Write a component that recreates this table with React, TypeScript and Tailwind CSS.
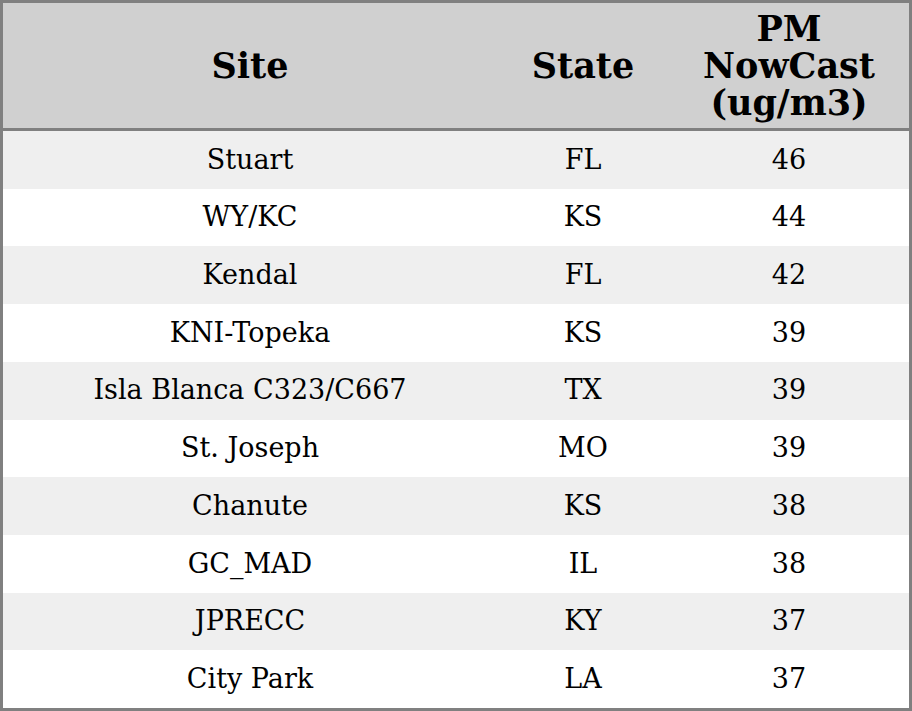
const ROWS = [
  { site: 'Stuart', state: 'FL', pm: 46 },
  { site: 'WY/KC', state: 'KS', pm: 44 },
  { site: 'Kendal', state: 'FL', pm: 42 },
  { site: 'KNI-Topeka', state: 'KS', pm: 39 },
  { site: 'Isla Blanca C323/C667', state: 'TX', pm: 39 },
  { site: 'St. Joseph', state: 'MO', pm: 39 },
  { site: 'Chanute', state: 'KS', pm: 38 },
  { site: 'GC_MAD', state: 'IL', pm: 38 },
  { site: 'JPRECC', state: 'KY', pm: 37 },
  { site: 'City Park', state: 'LA', pm: 37 },
];

export default function App() {
  return (
    <div
      className="w-[912px] h-[711px] bg-white border-[3px] border-[#808080] flex flex-col text-black"
      style={{ fontFamily: '"DejaVu Serif", serif' }}
    >
      {/* header */}
      <div className="h-[128px] shrink-0 bg-[#d0d0d0] border-b-[3px] border-[#808080] grid grid-cols-[494px_172px_1fr] items-center text-center font-bold text-[35px] leading-[37px]">
        <div>Site</div>
        <div>State</div>
        <div>PM<br />NowCast<br />(ug/m3)</div>
      </div>

      {/* rows */}
      <div className="flex-1 flex flex-col">
        {ROWS.map((r, i) => (
          <div
            key={r.site}
            className={`flex-1 grid grid-cols-[494px_172px_1fr] items-center text-center text-[27px] ${i % 2 === 0 ? 'bg-[#efefef]' : 'bg-white'}`}
          >
            <div>{r.site}</div>
            <div>{r.state}</div>
            <div>{r.pm}</div>
          </div>
        ))}
      </div>
    </div>
  );
}
